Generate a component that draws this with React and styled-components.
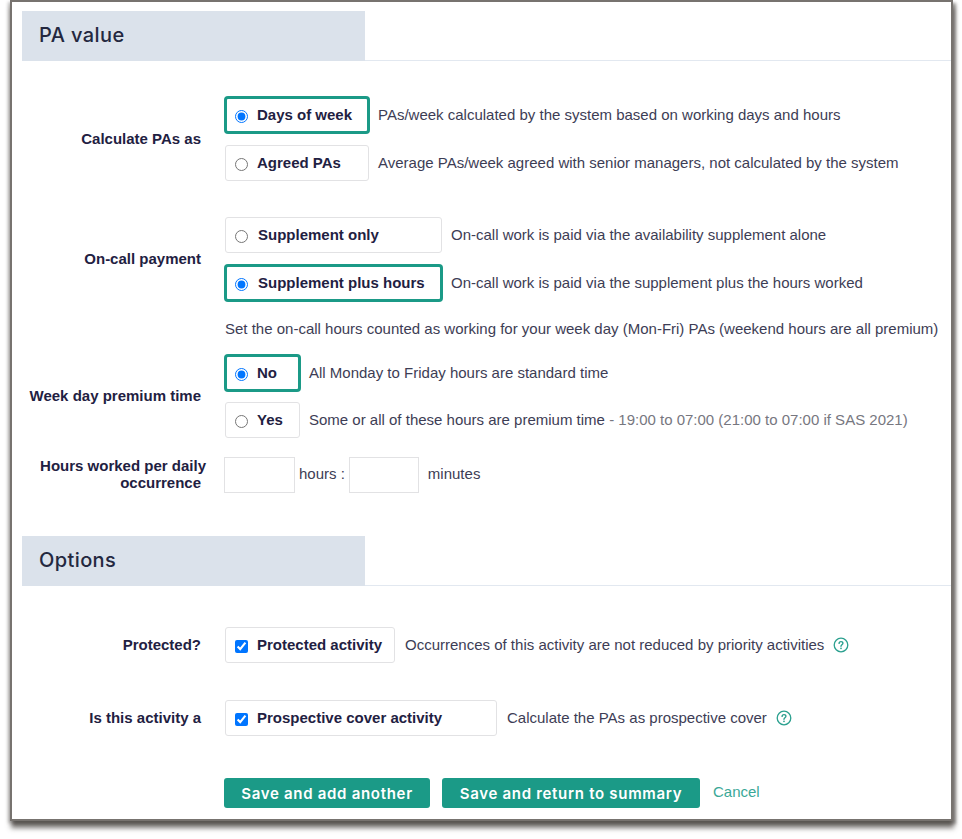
import React from "react";
import styled, { createGlobalStyle } from "styled-components";

const Global = createGlobalStyle`
  html, body { margin: 0; padding: 0; background: #fff; }
  body { font-family: "Liberation Sans", Arial, sans-serif; font-size: 15px; color: #3d3d55; }
  * { box-sizing: border-box; }
`;

const Page = styled.div`
  min-height: 839px;
  padding: 0 0 0 10px;
`;

const Frame = styled.div`
  width: 943px;
  height: 821px;
  background: #fff;
  border: 2px solid #77736f;
  box-shadow: 1px 7px 5px rgba(70, 66, 62, 0.72), 3px 3px 3px rgba(70, 66, 62, 0.5), -2px 2px 3px rgba(70, 66, 62, 0.3);
  padding: 9px 0 0 10px;
  overflow: hidden;
`;

const SectionHead = styled.div`
  height: 50px;
  border-bottom: 1px solid #e2e8f0;
  margin-top: ${(p) => p.$top || 0}px;
`;

const SectionTitle = styled.h2`
  margin: 0;
  width: 343px;
  height: 50px;
  background: #dbe2eb;
  padding: 0 0 2px 17px;
  display: flex;
  align-items: center;
  font-family: Inter, "Open Sans", sans-serif;
  font-size: 20px;
  font-weight: 500;
  letter-spacing: 0.4px;
  color: #24283f;
`;

const Field = styled.div`
  display: grid;
  grid-template-columns: 179px 1fr;
  column-gap: 24px;
  align-items: center;
  margin-top: ${(p) => p.$top || 0}px;
`;

const FieldLabel = styled.div`
  text-align: right;
  font-weight: 700;
  font-size: 15px;
  line-height: 17px;
  padding-bottom: 2px;
  color: #1f2142;
`;

const OverhangLine = styled.span`
  display: block;
  margin-right: -5px;
`;

const Stack = styled.div`
  display: flex;
  flex-direction: column;
  gap: ${(p) => p.$gap || 12}px;
`;

const OptionRow = styled.div`
  display: flex;
  align-items: center;
`;

const OptionBox = styled.label`
  width: ${(p) => p.$w}px;
  height: 36px;
  flex: none;
  display: flex;
  align-items: center;
  padding-left: ${(p) => (p.$on ? 8 : 9)}px;
  background: #fff;
  border-radius: 3px;
  border: ${(p) => (p.$on ? "2px solid #1b9a87" : "1px solid #e2e2e4")};
  box-shadow: ${(p) => (p.$on ? "0 0 0 1px #1b9a87" : "none")};
  font-weight: 700;
  color: #1f2142;
`;

const Radio = styled.input.attrs({ type: "radio", readOnly: true })`
  width: 13px;
  height: 13px;
  margin: 2px 0 0 0;
  flex: none;
`;

const Check = styled.input.attrs({ type: "checkbox", readOnly: true })`
  width: 13px;
  height: 13px;
  margin: 2px 0 0 0;
  flex: none;
`;

const OptionText = styled.span`
  margin-left: ${(p) => p.$gap || 9}px;
  margin-top: -1px;
  white-space: nowrap;
`;

const Desc = styled.span`
  margin-left: ${(p) => p.$gap || 9}px;
  margin-top: -1px;
  white-space: nowrap;
  color: #3d3d55;
`;

const Muted = styled.span`
  color: #77777f;
`;

const Note = styled.div`
  margin: 19px 0 18px;
  line-height: 17px;
  height: 17px;
  white-space: nowrap;
  color: #3d3d55;
`;

const TimeRow = styled.div`
  display: flex;
  align-items: center;
  height: 36px;
`;

const TimeInput = styled.input.attrs({ type: "text" })`
  width: ${(p) => p.$w}px;
  height: 36px;
  margin-left: ${(p) => p.$left}px;
  border: 1px solid #e2e2e4;
  background: #fff;
  padding: 0;
  outline: none;
`;

const TimeUnit = styled.span`
  margin-left: ${(p) => p.$left}px;
  margin-top: -3px;
  white-space: nowrap;
`;

const HelpIcon = styled.svg`
  width: 16px;
  height: 16px;
  margin-left: 9px;
  flex: none;
  color: #2ba08f;
`;

const Actions = styled.div`
  display: flex;
  align-items: center;
  margin: 42px 0 0 202px;
`;

const Button = styled.button`
  height: 30px;
  width: ${(p) => p.$w}px;
  margin-right: 12px;
  padding: 0;
  border: 0;
  border-radius: 3px;
  background: #1b9a87;
  color: #fff;
  font-family: Inter, "Open Sans", sans-serif;
  font-size: 15px;
  font-weight: 600;
  letter-spacing: 0.7px;
`;

const CancelLink = styled.a`
  color: #3aa897;
  font-size: 15px;
  margin: -3px 0 0 1px;
`;

const Help = () => (
  <HelpIcon viewBox="0 0 16 16" fill="none" stroke="currentColor">
    <circle cx="8" cy="8" r="6.8" strokeWidth="1.3" />
    <path d="M6.1 6.4c0-1.1.9-1.8 1.9-1.8s1.9.7 1.9 1.7c0 1.5-1.9 1.5-1.9 2.9" strokeWidth="1.4" strokeLinecap="round" />
    <circle cx="8" cy="11.3" r="0.85" fill="currentColor" stroke="none" />
  </HelpIcon>
);

const RadioOption = ({ w, on, name, label, children, textGap, descGap }) => (
  <OptionRow>
    <OptionBox $w={w} $on={on}>
      <Radio name={name} checked={!!on} onChange={() => {}} />
      <OptionText $gap={textGap}>{label}</OptionText>
    </OptionBox>
    <Desc $gap={descGap}>{children}</Desc>
  </OptionRow>
);

export default function App() {
  return (
    <Page>
      <Global />
      <Frame>
        <SectionHead>
          <SectionTitle>PA value</SectionTitle>
        </SectionHead>

        <Field $top={36}>
          <FieldLabel>Calculate PAs as</FieldLabel>
          <Stack>
            <RadioOption w={144} on name="calc" label="Days of week">
              PAs/week calculated by the system based on working days and hours
            </RadioOption>
            <RadioOption w={144} name="calc" label="Agreed PAs">
              Average PAs/week agreed with senior managers, not calculated by the system
            </RadioOption>
          </Stack>
        </Field>

        <Field $top={36}>
          <FieldLabel>On-call payment</FieldLabel>
          <Stack>
            <RadioOption w={217} name="oncall" label="Supplement only" textGap={10}>
              On-call work is paid via the availability supplement alone
            </RadioOption>
            <RadioOption w={217} on name="oncall" label="Supplement plus hours" textGap={10}>
              On-call work is paid via the supplement plus the hours worked
            </RadioOption>
          </Stack>
        </Field>

        <Field>
          <span />
          <Note>Set the on-call hours counted as working for your week day (Mon-Fri) PAs (weekend hours are all premium)</Note>
        </Field>

        <Field>
          <FieldLabel>Week day premium time</FieldLabel>
          <Stack $gap={11}>
            <RadioOption w={75} on name="premium" label="No">
              All Monday to Friday hours are standard time
            </RadioOption>
            <RadioOption w={75} name="premium" label="Yes">
              Some or all of these hours are premium time <Muted>- 19:00 to 07:00 (21:00 to 07:00 if SAS 2021)</Muted>
            </RadioOption>
          </Stack>
        </Field>

        <Field $top={19}>
          <FieldLabel>
            <OverhangLine>Hours worked per daily</OverhangLine>
            occurrence
          </FieldLabel>
          <TimeRow>
            <TimeInput $w={71} $left={-1} />
            <TimeUnit $left={4}>hours :</TimeUnit>
            <TimeInput $w={70} $left={4} />
            <TimeUnit $left={9}>minutes</TimeUnit>
          </TimeRow>
        </Field>

        <SectionHead $top={43}>
          <SectionTitle>Options</SectionTitle>
        </SectionHead>

        <Field $top={41}>
          <FieldLabel>Protected?</FieldLabel>
          <OptionRow>
            <OptionBox $w={170}>
              <Check defaultChecked />
              <OptionText>Protected activity</OptionText>
            </OptionBox>
            <Desc $gap={10}>Occurrences of this activity are not reduced by priority activities</Desc>
            <Help />
          </OptionRow>
        </Field>

        <Field $top={37}>
          <FieldLabel>Is this activity a</FieldLabel>
          <OptionRow>
            <OptionBox $w={272}>
              <Check defaultChecked />
              <OptionText>Prospective cover activity</OptionText>
            </OptionBox>
            <Desc $gap={10}>Calculate the PAs as prospective cover</Desc>
            <Help />
          </OptionRow>
        </Field>

        <Actions>
          <Button $w={206}>Save and add another</Button>
          <Button $w={258}>Save and return to summary</Button>
          <CancelLink>Cancel</CancelLink>
        </Actions>
      </Frame>
    </Page>
  );
}
